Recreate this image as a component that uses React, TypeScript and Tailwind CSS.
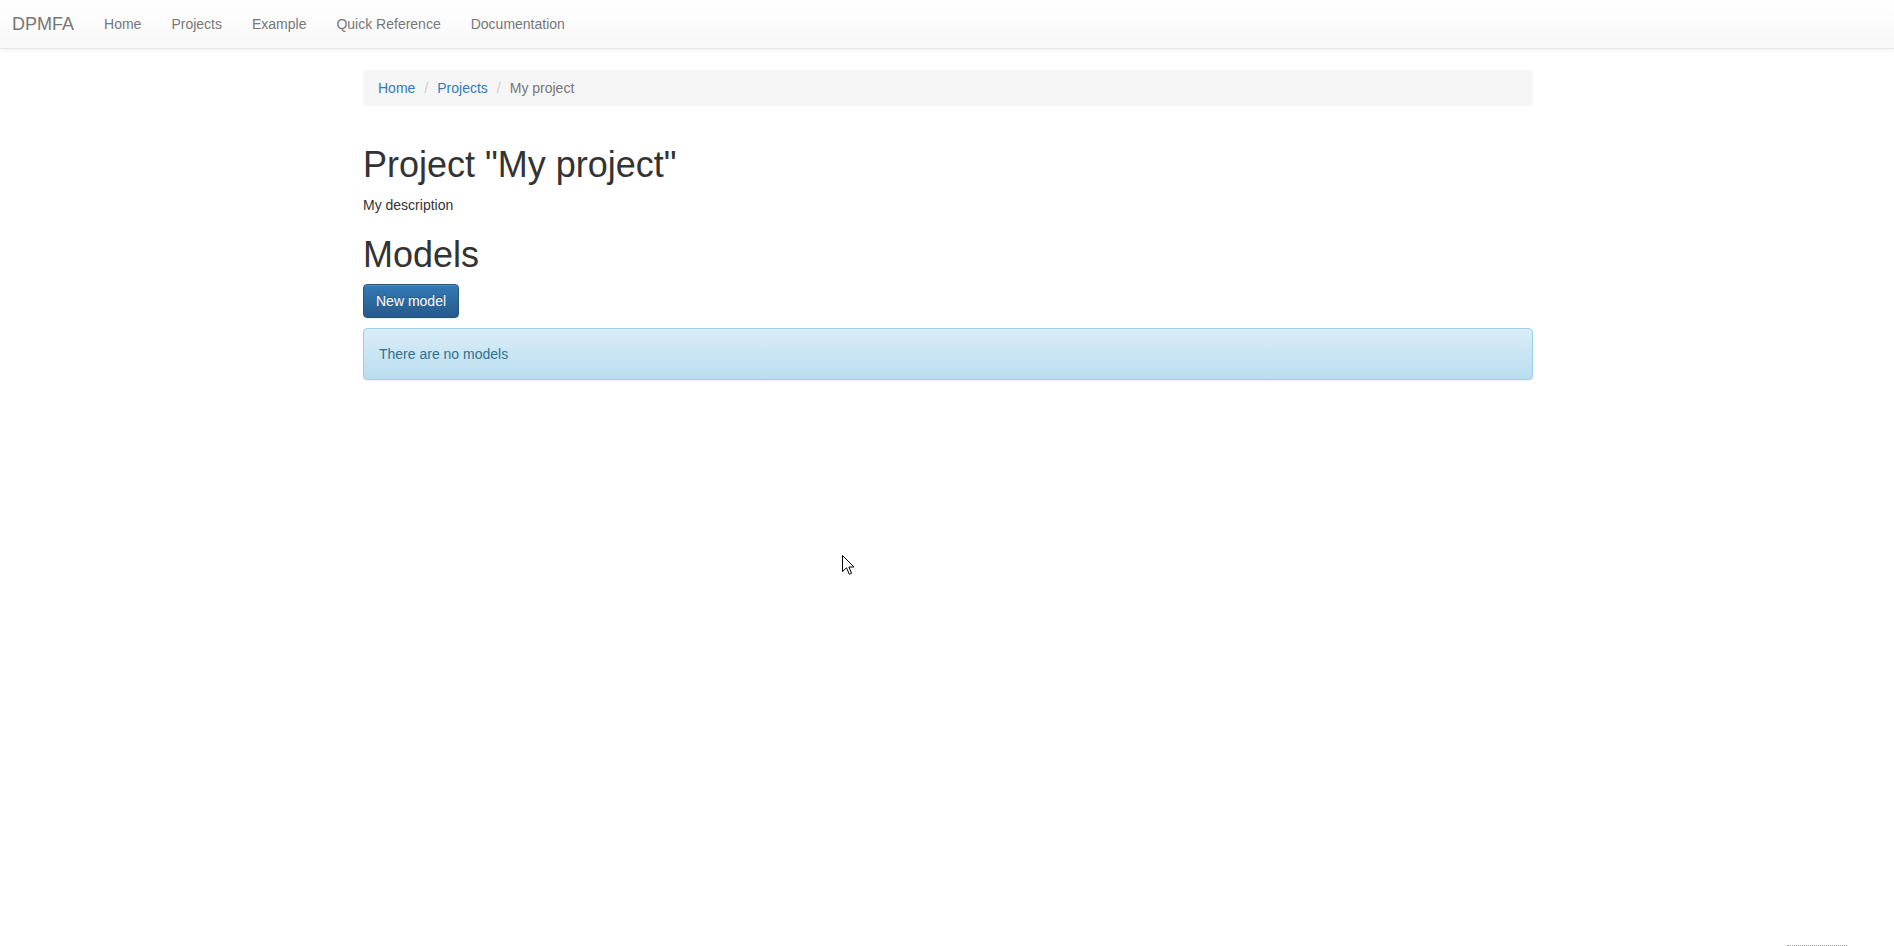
import React from 'react';

const navLinks = ['Home', 'Projects', 'Example', 'Quick Reference', 'Documentation'];

function Navbar() {
  return (
    <nav className="h-[49px] border-b border-[#e7e7e7] bg-gradient-to-b from-white to-[#f8f8f8] shadow-[inset_0_1px_0_rgba(255,255,255,0.15),0_1px_5px_rgba(0,0,0,0.075)]">
      <div className="flex h-full items-center">
        <a className="pl-[12px] pr-[15px] text-[18px] leading-[20px] text-[#777]">DPMFA</a>
        <ul className="flex">
          {navLinks.map((label) => (
            <li key={label}>
              <a className="block px-[15px] text-[14px] leading-[20px] text-[#777]">{label}</a>
            </li>
          ))}
        </ul>
      </div>
    </nav>
  );
}

function Breadcrumb() {
  const crumbs = ['Home', 'Projects'];
  return (
    <ol className="flex h-[36px] items-center rounded-[4px] bg-[#f5f5f5] px-[15px] text-[14px] leading-[20px]">
      {crumbs.map((c) => (
        <li key={c} className="flex">
          <a className="text-[#337ab7]">{c}</a>
          <span className="px-[9px] text-[#ccc]">/</span>
        </li>
      ))}
      <li className="text-[#777]">My project</li>
    </ol>
  );
}

function Cursor() {
  return (
    <svg
      className="pointer-events-none absolute left-[842px] top-[555px]"
      width="13"
      height="21"
      viewBox="0 0 13 21"
    >
      <path
        d="M0.5 0.5 L0.5 16.5 L4.5 12.8 L7.3 19.3 L9.6 18.3 L6.9 12 L12 12 Z"
        fill="white"
        stroke="black"
        strokeWidth="1"
        strokeLinejoin="miter"
      />
    </svg>
  );
}

export default function App() {
  return (
    <div className="relative min-h-screen bg-white font-['Liberation_Sans',Arial,sans-serif] text-[14px] leading-[20px] text-[#333]">
      <Navbar />

      <main className="ml-[363px] mt-[21px] w-[1170px]">
        <Breadcrumb />

        <h1 className="mt-[39px] mb-[10px] text-[36px] leading-[1.1] font-normal">Project "My project"</h1>
        <p className="mb-[10px]">My description</p>

        <h1 className="mt-[20px] mb-[10px] text-[36px] leading-[1.1] font-normal">Models</h1>
        <button className="h-[34px] rounded-[4px] border border-[#245580] bg-gradient-to-b from-[#337ab7] to-[#265a88] px-[12px] text-[14px] leading-[20px] text-white [text-shadow:0_-1px_0_rgba(0,0,0,0.2)] shadow-[inset_0_1px_0_rgba(255,255,255,0.15),0_1px_1px_rgba(0,0,0,0.075)]">
          New model
        </button>

        <div className="mt-[10px] rounded-[4px] border border-[#9acfea] bg-gradient-to-b from-[#d9edf7] to-[#b9def0] p-[15px] text-[#31708f] shadow-[inset_0_1px_0_rgba(255,255,255,0.25),0_1px_2px_rgba(0,0,0,0.05)]">
          There are no models
        </div>
      </main>

      <Cursor />
      <div className="absolute bottom-0 left-[1787px] w-[60px] border-t border-dotted border-[#999]" />
    </div>
  );
}
